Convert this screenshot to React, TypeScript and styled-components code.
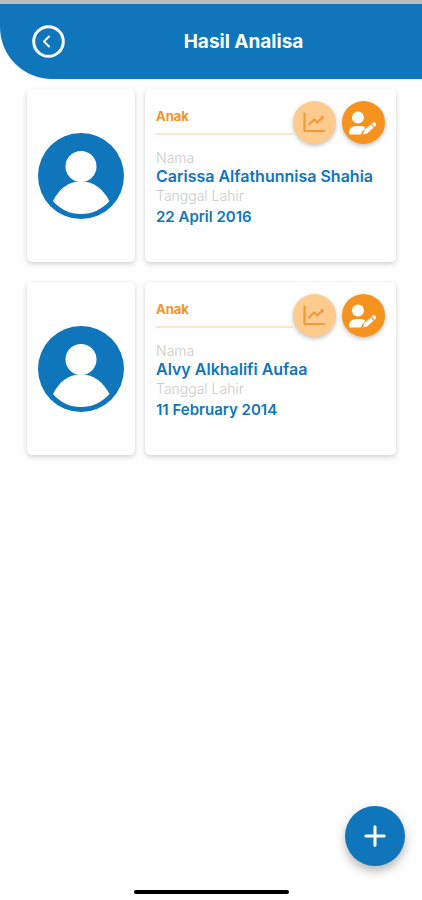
import React from "react";
import styled, { createGlobalStyle } from "styled-components";

const blue = "#1076bc";
const orange = "#f6921e";

const GlobalStyle = createGlobalStyle`
  *, *::before, *::after { box-sizing: border-box; }
  body {
    margin: 0;
    background: #fefefe;
    font-family: Inter, "Open Sans", sans-serif;
  }
  h1, h2, dl, dd, ul { margin: 0; padding: 0; }
`;

const Screen = styled.div`
  min-height: 100vh;
  display: flex;
  flex-direction: column;
`;

const StatusStrip = styled.div`
  height: 4px;
  background: #bcbcbc;
`;

const Header = styled.header`
  display: flex;
  align-items: center;
  height: 75px;
  padding-left: 32px;
  background: ${blue};
  border-bottom-left-radius: 52px;
`;

const BackButton = styled.button`
  display: flex;
  flex: none;
  width: 33px;
  height: 33px;
  padding: 0;
  border: 0;
  background: none;
  color: #fff;
  cursor: pointer;
`;

const Title = styled.h1`
  flex: 1;
  text-align: center;
  color: #fff;
  font-size: 19px;
  line-height: 24px;
  font-weight: 700;
`;

const ChildList = styled.ul`
  flex: 1;
  display: flex;
  flex-direction: column;
  gap: 20px;
  padding: 10px 26px 20px 27px;
  list-style: none;
`;

const ChildRow = styled.li`
  display: grid;
  grid-template-columns: 108px 1fr;
  gap: 10px;
`;

const Card = styled.article`
  min-height: 173px;
  background: #fff;
  border-radius: 5px;
  box-shadow: 0 2px 5px rgba(0, 0, 0, 0.18);
`;

const AvatarCard = styled(Card)`
  display: flex;
  align-items: center;
  justify-content: center;
`;

const DetailCard = styled(Card)`
  padding: 12px 11px;
`;

const CardTop = styled.div`
  display: flex;
  margin-bottom: 5px;
`;

const Category = styled.h2`
  flex: 1;
  height: 34px;
  padding-top: 6px;
  border-bottom: 2px solid #fee6c8;
  color: ${orange};
  font-size: 13px;
  line-height: 18px;
  font-weight: 700;
`;

const Actions = styled.div`
  display: flex;
  gap: 6px;
`;

const RoundButton = styled.button<{ $soft?: boolean }>`
  display: flex;
  flex: none;
  align-items: center;
  justify-content: center;
  width: 43px;
  height: 43px;
  padding: 0;
  border: 0;
  border-radius: 50%;
  background: ${(p) => (p.$soft ? "#fdcb8e" : orange)};
  color: ${(p) => (p.$soft ? "#f09a3a" : "#fff")};
  box-shadow: 0 2px 4px rgba(0, 0, 0, 0.24);
  cursor: pointer;
`;

const Details = styled.dl`
  display: grid;
`;

const Label = styled.dt`
  color: #cbcbcb;
  font-size: 14px;
  line-height: 18px;
  font-weight: 300;
`;

const Name = styled.dd`
  margin-bottom: 2px;
  color: ${blue};
  font-size: 16px;
  line-height: 18px;
  font-weight: 600;
`;

const BirthDate = styled.dd`
  color: ${blue};
  font-size: 15px;
  line-height: 24px;
  font-weight: 600;
`;

const Footer = styled.footer`
  position: sticky;
  bottom: 0;
  display: flex;
  flex-direction: column;
  gap: 24px;
  padding: 0 17px 6px;
`;

const AddButton = styled.button`
  display: flex;
  align-items: center;
  justify-content: center;
  align-self: flex-end;
  width: 60px;
  height: 60px;
  padding: 0;
  border: 0;
  border-radius: 50%;
  background: ${blue};
  color: #fff;
  box-shadow: 0 5px 10px rgba(0, 0, 0, 0.28);
  cursor: pointer;
`;

const HomeIndicator = styled.div`
  align-self: center;
  width: 155px;
  height: 4px;
  border-radius: 2px;
  background: #000;
`;

const BackIcon = () => (
  <svg width="33" height="33" viewBox="0 0 33 33" fill="none" stroke="currentColor" aria-hidden="true">
    <circle cx="16.5" cy="16.5" r="14.8" strokeWidth="3" />
    <path d="M17 11.500l-5 5 5 5" strokeWidth="2" strokeLinecap="round" strokeLinejoin="round" />
  </svg>
);

const AvatarIcon = () => (
  <svg width="86" height="86" viewBox="0 0 86 86" role="img" aria-label="Foto profil">
    <circle cx="43" cy="43" r="43" fill={blue} />
    <circle cx="43" cy="33.5" r="15.5" fill="#fff" />
    <path d="M15 68C21 56 30 48.500 43 48.500S65 56 71.500 68C64 76.500 54 81 43 81S22 76.500 15 68z" fill="#fff" />
  </svg>
);

const ChartIcon = () => (
  <svg width="24" height="22" viewBox="0 0 24 22" fill="none" stroke="currentColor" aria-hidden="true">
    <path d="M1.500 1.500V19H21" strokeWidth="2.200" strokeLinecap="round" strokeLinejoin="round" />
    <path d="M6 12.500L11.200 7.500l3 3L19.500 5.500" strokeWidth="2.200" strokeLinecap="round" strokeLinejoin="round" />
    <path d="M17 4.300h3.600v3.700z" fill="currentColor" stroke="none" />
  </svg>
);

const UserPenIcon = () => (
  <svg width="30" height="24" viewBox="0 0 30 24" fill="currentColor" aria-hidden="true">
    <circle cx="9" cy="6.500" r="6" />
    <path d="M1.200 23.500Q0 23.500 0 22.200C0 18 2.800 15 7 15h4.500c2.200 0 4 .7 5.200 2l-3.500 3.500-1.200 3z" />
    <path d="M14 23.500l1.200-4 6.600-6 2.900 3.100-6.600 6z" />
    <path d="M22.600 12.700l1.300-1.200q1.300-.9 2.500.2t.4 2.700l-1.300 1.300z" />
  </svg>
);

const PlusIcon = () => (
  <svg width="22" height="22" viewBox="0 0 22 22" stroke="currentColor" strokeWidth="3" strokeLinecap="round" aria-hidden="true">
    <path d="M11 1.800v18.400M1.800 11h18.400" />
  </svg>
);

const children = [
  { name: "Carissa Alfathunnisa Shahia", born: "22 April 2016" },
  { name: "Alvy Alkhalifi Aufaa", born: "11 February 2014" },
];

export default function App() {
  return (
    <Screen>
      <GlobalStyle />
      <StatusStrip />
      <Header>
        <BackButton aria-label="Kembali">
          <BackIcon />
        </BackButton>
        <Title>Hasil Analisa</Title>
      </Header>
      <ChildList>
        {children.map((child) => (
          <ChildRow key={child.name}>
            <AvatarCard>
              <AvatarIcon />
            </AvatarCard>
            <DetailCard>
              <CardTop>
                <Category>Anak</Category>
                <Actions>
                  <RoundButton $soft aria-label="Grafik">
                    <ChartIcon />
                  </RoundButton>
                  <RoundButton aria-label="Ubah data">
                    <UserPenIcon />
                  </RoundButton>
                </Actions>
              </CardTop>
              <Details>
                <Label>Nama</Label>
                <Name>{child.name}</Name>
                <Label>Tanggal Lahir</Label>
                <BirthDate>{child.born}</BirthDate>
              </Details>
            </DetailCard>
          </ChildRow>
        ))}
      </ChildList>
      <Footer>
        <AddButton aria-label="Tambah">
          <PlusIcon />
        </AddButton>
        <HomeIndicator />
      </Footer>
    </Screen>
  );
}
